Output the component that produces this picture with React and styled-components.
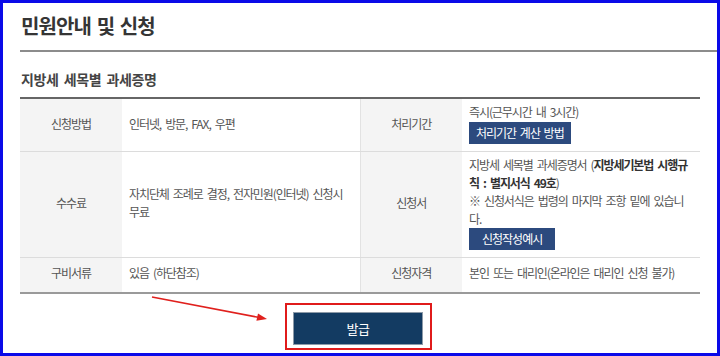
import React from 'react';
import styled, { createGlobalStyle } from 'styled-components';

const Global = createGlobalStyle`
  html, body { margin: 0; padding: 0; background: #fff; }
  body { font-family: "Noto Sans CJK KR", "Noto Sans", sans-serif; }
  * { box-sizing: border-box; }
`;

const Frame = styled.div`
  position: relative;
  width: 720px;
  height: 356px;
  border: 3px solid #0a0ae8;
  background: #fff;
  overflow: hidden;
  display: flex;
  flex-direction: column;
`;

const PageTitle = styled.h1`
  margin: 0 0 0 17px;
  padding: 10px 0 11px 1px;
  font-size: 20px;
  line-height: 26px;
  font-weight: 700;
  letter-spacing: -0.9px;
  word-spacing: 2px;
  color: #353535;
  border-bottom: 2px solid #8c8c8c;
`;

const SectionTitle = styled.h2`
  margin: 17px 0 8px 17px;
  padding-left: 1px;
  font-size: 14px;
  line-height: 20px;
  font-weight: 700;
  letter-spacing: -0.4px;
  word-spacing: 2.5px;
  color: #444;
`;

const Table = styled.table`
  margin-left: 17px;
  width: 680px;
  table-layout: fixed;
  border-collapse: collapse;
  border-top: 2px solid #666;
  border-bottom: 2px solid #9a9a9a;
`;

const Row = styled.tr`
  height: ${p => p.$h || 'auto'};
`;

const Label = styled.th`
  background: #f4f4f4;
  color: #555;
  font-weight: 400;
  font-size: 12px;
  line-height: 18px;
  letter-spacing: -1.1px;
  text-align: center;
  vertical-align: middle;
  padding: 4px 4px 7px;
  border-bottom: 1px solid #dcdcdc;
  border-left: ${p => (p.$divider ? '1px solid #e2e2e2' : 'none')};
`;

const Value = styled.td`
  color: #555;
  font-size: 12px;
  line-height: 18px;
  letter-spacing: -1.1px;
  word-spacing: 2.5px;
  text-align: left;
  vertical-align: middle;
  padding: 4px 3px 7px 7px;
  border-bottom: 1px solid #dcdcdc;
`;

const Strong = styled.b`
  color: #333;
  font-weight: 700;
`;

const SmallButton = styled.button`
  display: block;
  margin-top: ${p => p.$mt || '0px'};
  height: 22px;
  padding: 0 ${p => p.$px || '8px'};
  border: none;
  background: #2c4a7e;
  color: #fff;
  font-family: inherit;
  font-size: 12px;
  letter-spacing: -1px;
  word-spacing: 2px;
  line-height: 22px;
  cursor: pointer;
`;

const Actions = styled.div`
  display: flex;
  justify-content: center;
  margin-top: 9px;
  padding-right: 3px;
`;

const Highlight = styled.div`
  border: 2px solid #e01b1b;
  padding: 7px 7px 3px 6px;
`;

const IssueButton = styled.button`
  width: 130px;
  height: 33px;
  border: 1px solid #8d9aa8;
  background: #133b62;
  color: #fff;
  font-family: inherit;
  font-size: 13px;
  letter-spacing: -0.5px;
  cursor: pointer;
`;

const Arrow = styled.svg`
  position: absolute;
  left: 146px;
  top: 292px;
  overflow: visible;
`;

export default function App() {
  return (
    <>
      <Global />
      <Frame>
        <PageTitle>민원안내 및 신청</PageTitle>
        <SectionTitle>지방세 세목별 과세증명</SectionTitle>
        <Table>
          <colgroup>
            <col style={{ width: 102 }} />
            <col style={{ width: 238 }} />
            <col style={{ width: 102 }} />
            <col style={{ width: 238 }} />
          </colgroup>
          <tbody>
            <Row>
              <Label>신청방법</Label>
              <Value>인터넷, 방문, FAX, 우편</Value>
              <Label $divider>처리기간</Label>
              <Value>
                즉시(근무시간 내 3시간)
                <SmallButton $mt="1px" $px="7px">처리기간 계산 방법</SmallButton>
              </Value>
            </Row>
            <Row>
              <Label>수수료</Label>
              <Value>
                자치단체 조례로 결정, 전자민원(인터넷) 신청시<br />무료
              </Value>
              <Label $divider>신청서</Label>
              <Value>
                지방세 세목별 과세증명서 (<Strong>지방세기본법 시행규<br />칙 : 별지서식 49호</Strong>)<br />
                ※ 신청서식은 법령의 마지막 조항 밑에 있습니<br />다.
                <SmallButton $px="13px">신청작성예시</SmallButton>
              </Value>
            </Row>
            <Row $h="35px">
              <Label>구비서류</Label>
              <Value>있음 (하단참조)</Value>
              <Label $divider>신청자격</Label>
              <Value>본인 또는 대리인(온라인은 대리인 신청 불가)</Value>
            </Row>
          </tbody>
        </Table>
        <Actions>
          <Highlight>
            <IssueButton>발급</IssueButton>
          </Highlight>
        </Actions>
        <Arrow width="124" height="30" viewBox="0 0 124 30">
          <line x1="3" y1="2" x2="109" y2="22.3" stroke="#e0201d" strokeWidth="1.6" />
          <polygon points="118,24 107.4,25.7 109,18.6" fill="#e0201d" />
        </Arrow>
      </Frame>
    </>
  );
}
